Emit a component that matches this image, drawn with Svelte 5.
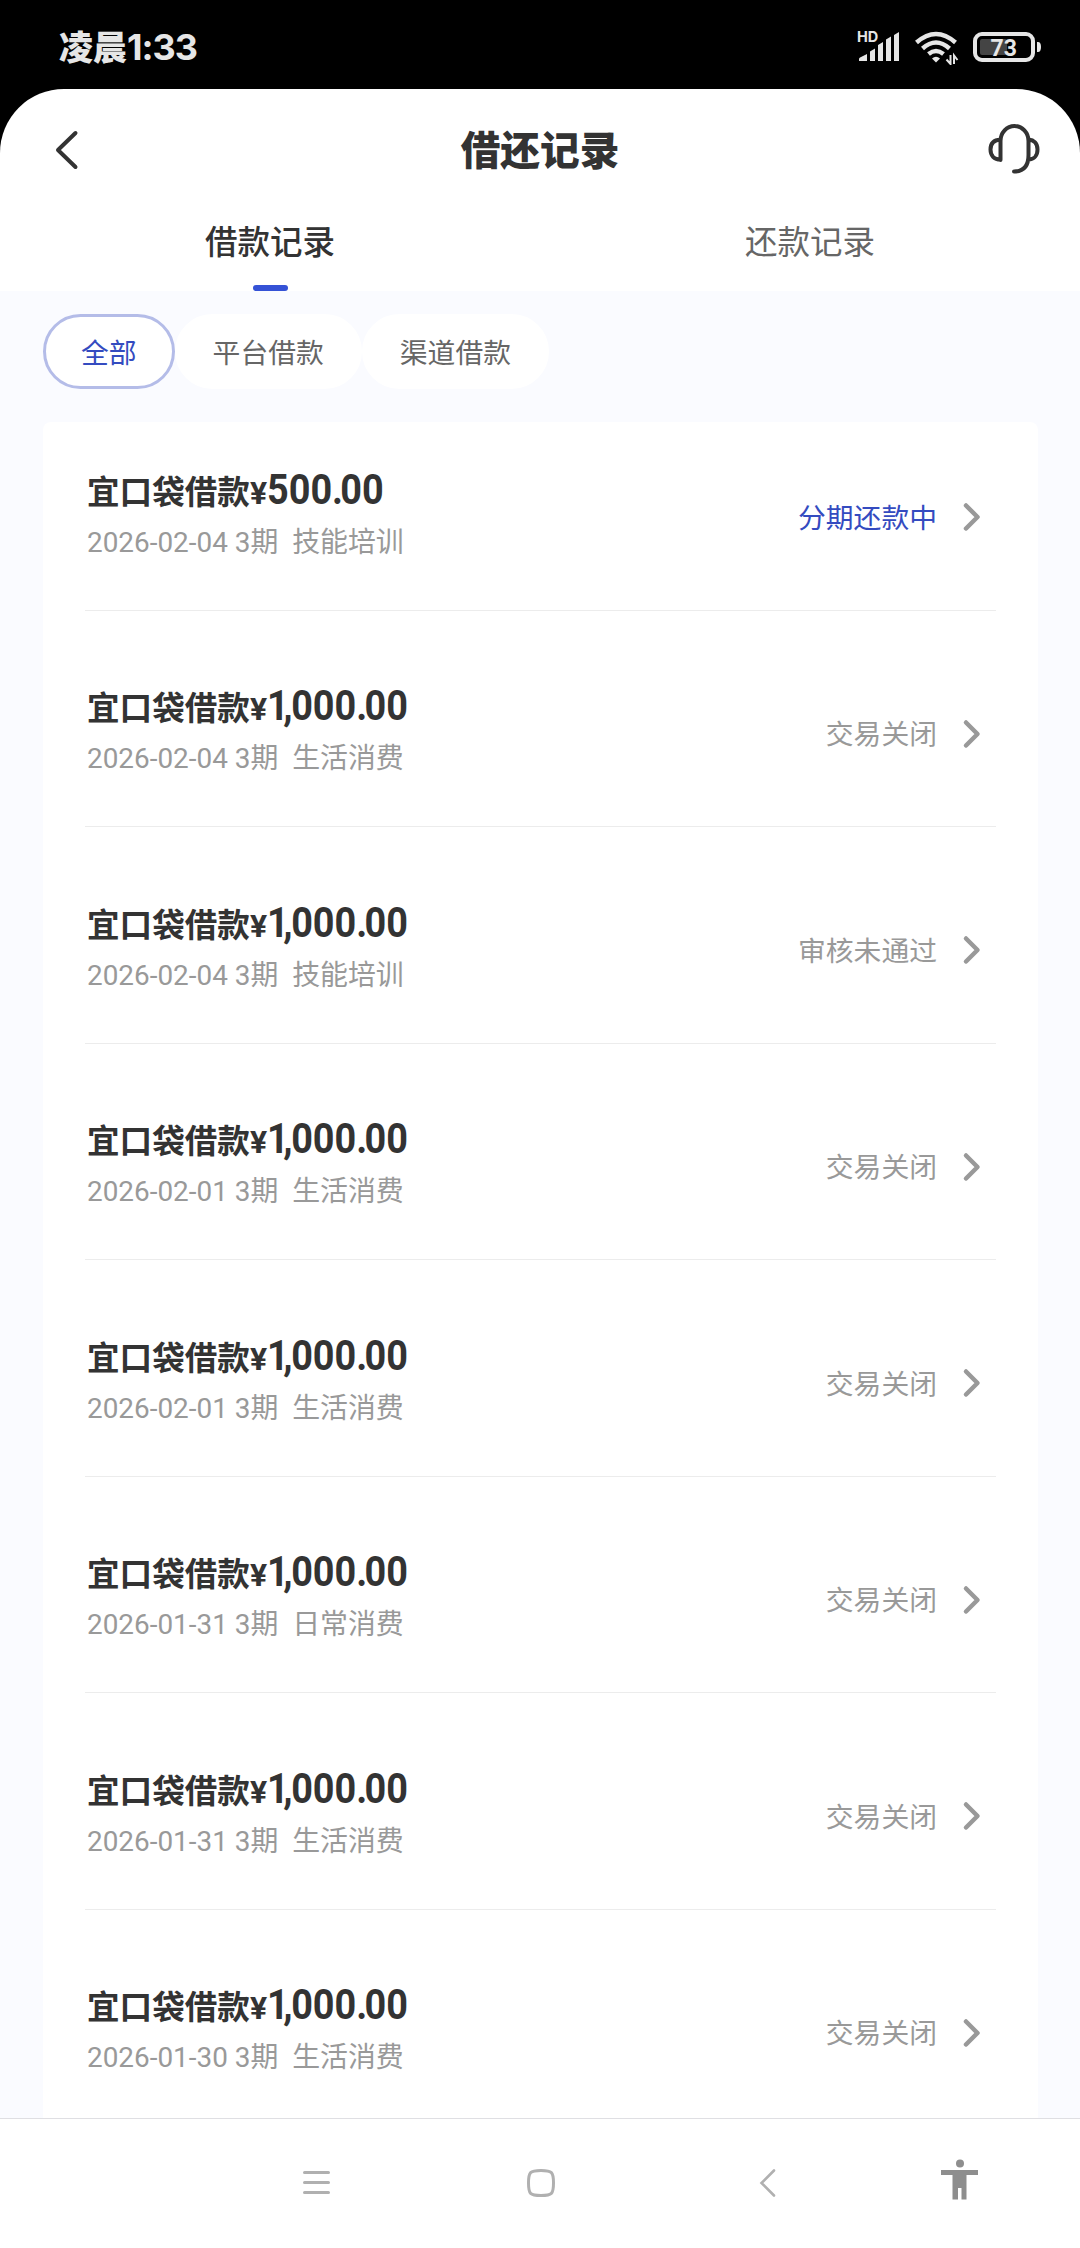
<script>
  const filters = ['全部', '平台借款', '渠道借款'];
  const records = [
    { amount: '500.00', date: '2026-02-04', use: '技能培训', status: '分期还款中', active: true },
    { amount: '1,000.00', date: '2026-02-04', use: '生活消费', status: '交易关闭' },
    { amount: '1,000.00', date: '2026-02-04', use: '技能培训', status: '审核未通过' },
    { amount: '1,000.00', date: '2026-02-01', use: '生活消费', status: '交易关闭' },
    { amount: '1,000.00', date: '2026-02-01', use: '生活消费', status: '交易关闭' },
    { amount: '1,000.00', date: '2026-01-31', use: '日常消费', status: '交易关闭' },
    { amount: '1,000.00', date: '2026-01-31', use: '生活消费', status: '交易关闭' },
    { amount: '1,000.00', date: '2026-01-30', use: '生活消费', status: '交易关闭' }
  ];
  let filter = $state('全部');
</script>

<div class="screen">
  <div class="statusbar">
    <span class="clock">凌晨<b>1:33</b></span>
    <svg class="signals" width="186" height="36" viewBox="856 29 186 36" fill="#e6e6e6">
      <text x="857" y="42" class="hd">HD</text>
      <path d="M859 61v-2q0-1 1-1.500L867 54v7zM870 61V51.500l5-3V61zM878 61V45l5-3V61zM886 61V39.500l5-3V61zM894 61V35l5-3V61z" />
      <g fill="none" stroke="#e6e6e6" stroke-width="4.500">
        <path d="M916.500 42.500Q936 25.500 955.500 42.500" />
        <path d="M922.500 48.500Q936 36.500 949.500 48.500" />
        <path d="M928.500 54Q936 48 943.500 54" />
      </g>
      <path d="M932 58.500Q936 55 940 58.500L936 62.500z" />
      <path d="M950.500 55v9l-4-4.500M954 64v-8.500l3.500 4.500" fill="none" stroke="#e6e6e6" stroke-width="2" />
      <rect x="975" y="34" width="58" height="26" rx="7" fill="none" stroke="#e6e6e6" stroke-width="4" />
      <rect x="980" y="39" width="27" height="16" rx="2" fill="#444" />
      <path d="M1037 42h1q3 0 3 5t-3 5h-1z" />
      <text x="990.500" y="55.500" class="level">73</text>
    </svg>
  </div>

  <div class="app">
    <header>
      <svg class="back" width="24" height="42" viewBox="0 0 24 42"><path d="M20.500 4L3 21l17.500 17" /></svg>
      <h1>借还记录</h1>
      <svg class="service" width="54" height="54" viewBox="0 0 54 54">
        <path d="M14.500 38V19a14 15 0 0 1 28 0V33Q42.500 49.500 28 49.500M14.500 17.500C8 18 4.500 21.500 4.500 27.500S8 37.500 14.500 37.500M42.500 17.500C48 18 51.500 21.500 51.500 27.500S48 37.500 42.500 37.500" />
      </svg>
    </header>
    <nav class="tabs">
      <button class="tab current">借款记录</button>
      <button class="tab">还款记录</button>
    </nav>
    <main>
      <div class="filters">
        {#each filters as f}
          <button class="chip" class:chosen={f === filter} onclick={() => (filter = f)}>{f}</button>
        {/each}
      </div>
      <section class="card">
        {#each records as r}
          <article class="row">
            <div class="info">
              <div class="title">
                <span>宜口袋借款</span><span class="yen">¥</span><span class="amount">{#each r.amount as c}<i class:one={c === '1'} class:comma={c === ','} class:dot={c === '.'}>{c}</i>{/each}</span>
              </div>
              <div class="meta">{r.date} 3期&nbsp; {r.use}</div>
            </div>
            <span class="state" class:active={r.active}>{r.status}</span>
            <svg width="20" height="32" viewBox="0 0 20 32"><path d="M4 4.500L15.500 16L4 27.500" /></svg>
          </article>
        {/each}
      </section>
    </main>
  </div>

  <footer>
    <svg width="1080" height="129" viewBox="0 0 1080 129">
      <g fill="none" stroke="#b0b0b0" stroke-width="3" stroke-linecap="round">
        <path d="M304.500 53.500h24M304.500 63.500h24M304.500 73.500h24" />
        <path d="M541 51.500C552 51.500 553.500 53 553.500 64S552 76.500 541 76.500 528.500 75 528.500 64 530 51.500 541 51.500z" />
        <path d="M774 51.500L761.500 64L774 76.500" stroke-width="2.600" />
      </g>
      <g fill="#8e8e8e">
        <circle cx="960" cy="44.500" r="4" />
        <path d="M941 51h37v5h-11.500v24.500h-5V69h-3.500v11.500h-5.500V56H941z" />
      </g>
    </svg>
  </footer>
</div>

<style>
  :global(body) { background: #000; }
  .screen {
    width: 1080px;
    height: 2248px;
    display: flex;
    flex-direction: column;
    overflow: hidden;
    background: #000;
    font-family: Roboto, "Noto Sans CJK SC", sans-serif;
    color: #333;
  }
  button { font: inherit; border: 0; background: none; margin: 0; padding: 0; }
  .statusbar {
    height: 89px;
    flex: none;
    box-sizing: border-box;
    padding: 0 38px 0 59px;
    display: flex;
    align-items: center;
    justify-content: space-between;
    color: #e6e6e6;
  }
  .clock { font: 900 34px/48px "Noto Sans CJK SC", sans-serif; padding-top: 3px; }
  .clock b { font: bold 36px/48px Inter, sans-serif; letter-spacing: -1px; }
  .signals { margin-top: 5px; }
  .hd { font: bold 14.500px Inter, sans-serif; }
  .level { font: bold 23px Roboto, sans-serif; }
  .app {
    height: 2029px;
    flex: none;
    display: flex;
    flex-direction: column;
    background: #fff;
    border-radius: 64px 64px 0 0;
    overflow: hidden;
  }
  header {
    height: 122px;
    flex: none;
    box-sizing: border-box;
    padding: 0 38px 0 55px;
    display: grid;
    grid-template-columns: 54px 1fr 71px;
    align-items: center;
  }
  header svg, .row svg { fill: none; stroke: #333; stroke-linecap: round; stroke-linejoin: round; }
  .back { stroke-width: 4; }
  .service { stroke-width: 4; margin-top: -3px; justify-self: end; margin-right: 2px; }
  h1 { margin: 0; font-size: 39.700px; line-height: 56px; font-weight: 900; text-align: center; padding-top: 4px; }
  .tabs { height: 80px; flex: none; display: flex; }
  .tab {
    flex: 1;
    display: flex;
    flex-direction: column;
    align-items: center;
    justify-content: space-between;
    font-size: 32.500px;
    line-height: 65px;
    color: #666;
  }
  .current { color: #333; font-weight: 500; }
  .current::after { content: ""; width: 35px; height: 6px; border-radius: 3px; background: #3552d6; }
  main { flex: 1; min-height: 0; background: #fafbff; padding: 23px 42px 0 43px; }
  .filters { display: flex; height: 75px; }
  .chip {
    box-sizing: border-box;
    border: 3px solid #fff;
    border-radius: 38px;
    background: #fff;
    padding: 4px 35px 0;
    font-size: 27.800px;
    line-height: 65px;
    color: #666;
  }
  .chip.chosen { border-color: #b4bce8; color: #344bc0; }
  .card { margin-top: 33px; background: #fff; border-radius: 8px 8px 0 0; padding: 0 42px; }
  .row {
    height: 188.500px;
    margin-bottom: 28px;
    box-sizing: border-box;
    border-bottom: 1px solid #ececec;
    padding: 3px 14px 0 2px;
    display: flex;
    align-items: center;
  }
  .info { flex: 1; padding-bottom: 4px; }
  .title { display: flex; align-items: baseline; font-size: 32.600px; line-height: 52px; font-weight: 700; }
  .yen { font-size: 32px; width: 17px; }
  .amount { font-size: 42px; display: flex; transform: scaleX(.9); transform-origin: left; }
  .amount i { font-style: normal; }
  .amount .one { letter-spacing: -6px; }
  .amount .comma { letter-spacing: -1.600px; }
  .amount .dot { letter-spacing: -3px; }
  .meta { font-size: 27.900px; line-height: 48px; color: #999; }
  .state { font-size: 27.800px; line-height: 40px; color: #999; padding-top: 3px; }
  .state.active { color: #344bc0; }
  .row svg { margin-left: 25px; stroke: #999; stroke-width: 4.500; }
  footer { height: 129px; flex: none; border-top: 1px solid #dfdfe3; background: #fff; }
  footer svg { display: block; }
</style>
